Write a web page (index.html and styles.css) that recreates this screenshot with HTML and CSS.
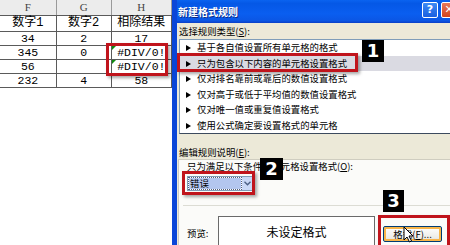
FILE: index.html
```html
<!DOCTYPE html>
<html lang="zh-CN">
<head>
    <meta charset="UTF-8">
    <title>新建格式规则</title>
    <link rel="stylesheet" href="styles.css">
</head>
<body>
<div class="page">
    <!-- Spreadsheet part -->
    <div class="sheet">
        <table class="grid">
            <tr class="col-head"><th>F</th><th>G</th><th>H</th></tr>
            <tr class="first"><td>数字1</td><td>数字2</td><td>相除结果</td></tr>
            <tr><td>34</td><td>2</td><td>17</td></tr>
            <tr><td>345</td><td>0</td><td class="err">#DIV/0!</td></tr>
            <tr><td>56</td><td></td><td class="err">#DIV/0!</td></tr>
            <tr><td>232</td><td>4</td><td>58</td></tr>
        </table>
    </div>

    <!-- Dialog -->
    <div class="dialog">
        <div class="titlebar">
            <span class="title">新建格式规则</span>
            <span class="tbtn help">?</span>
            <span class="tbtn close">✕</span>
        </div>
        <div class="dlg-body">
            <div class="lbl top-lbl">选择规则类型(<u>S</u>):</div>
            <ul class="rules">
                <li>基于各自值设置所有单元格的格式</li>
                <li class="sel">只为包含以下内容的单元格设置格式</li>
                <li>仅对排名靠前或靠后的数值设置格式</li>
                <li>仅对高于或低于平均值的数值设置格式</li>
                <li>仅对唯一值或重复值设置格式</li>
                <li>使用公式确定要设置格式的单元格</li>
            </ul>
            <div class="lbl edit-lbl">编辑规则说明(<u>E</u>):</div>
            <div class="panel">
                <div class="lbl">只为满足以下条件的单元格设置格式(<u>O</u>):</div>
                <div class="combo">
                    <span class="combo-val"><span class="hl">错误</span></span>
                    <span class="combo-btn">
                        <svg width="7" height="5" viewBox="0 0 7 5"><path d="M0.5 0.8 L3.5 3.8 L6.5 0.8" fill="none" stroke="#4d6185" stroke-width="1.4"/></svg>
                    </span>
                </div>
                <div class="sep"></div>
                <div class="preview-row">
                    <span class="lbl pv-lbl">预览:</span>
                    <div class="preview">未设定格式</div>
                    <button class="fmt-btn">格式(<u>F</u>)...</button>
                </div>
            </div>
        </div>
    </div>

    <!-- Annotations -->
    <div class="mark mark-cells"></div>
    <div class="mark mark-rule"></div>
    <div class="mark mark-combo"></div>
    <div class="mark mark-btn"></div>
    <div class="badge b1">1</div>
    <div class="badge b2">2</div>
    <div class="badge b3">3</div>
    <svg class="cursor" width="11" height="17" viewBox="0 0 11 17">
        <path d="M1 1 L1 14 L4 11 L6.5 16 L8.5 15 L6 10 L10 10 Z" fill="#fff" stroke="#000" stroke-width="1"/>
    </svg>
</div>
</body>
</html>
```

FILE: styles.css
```css
html, body {
    margin: 0;
    padding: 0;
    background: #fff;
}
.page {
    position: relative;
    width: 450px;
    height: 245px;
    overflow: hidden;
    display: flex;
    align-items: flex-start;
}

/* sheet */
.sheet {
    width: 172px;
    flex: none;
    overflow: hidden;
}
.grid {
    border-collapse: collapse;
    margin-left: -1px;
    font-family: "Liberation Mono", "Noto Sans CJK SC", monospace;
    font-size: 11.5px;
}
.grid th, .grid td {
    border: 1px solid #5a5a5a;
    padding: 0;
    text-align: center;
    height: 13px;
    line-height: 13px;
    white-space: nowrap;
}
.grid th:nth-child(1), .grid td:nth-child(1) { width: 57px; }
.grid th:nth-child(2), .grid td:nth-child(2) { width: 55px; }
.grid th:nth-child(3), .grid td:nth-child(3) { width: 60px; }
.col-head th {
    background: #ececec;
    border-top: none;
    border-color: #9a9a9a;
    border-bottom-color: #5a5a5a;
    font-family: "Liberation Serif", serif;
    font-weight: normal;
    font-size: 11px;
    color: #444;
    height: 15px;
}
.first td {
    height: 15px;
    font-size: 12px;
}
.err {
    position: relative;
}
.err::before {
    content: "";
    position: absolute;
    left: 0;
    top: 0;
    border-top: 4px solid #108a10;
    border-right: 4px solid transparent;
}

/* dialog */
.dialog {
    width: 283px;
    flex: none;
    height: 245px;
    border-left: 5px solid #0a46d8;
    background: #ece9d8;
    font-family: "Noto Sans CJK SC", "DejaVu Sans", sans-serif;
    font-size: 9.4px;
    color: #000;
}
.titlebar {
    height: 23px;
    display: flex;
    align-items: center;
    padding-left: 1px;
    padding-right: 3px;
    background: linear-gradient(#0a63f0, #0558e6 15%, #0a5ef0 60%, #0b56e4 90%, #0a3fc6);
}
.title {
    color: #fff;
    font-weight: bold;
    font-size: 10px;
    text-shadow: 1px 1px 0 #0a2a8a;
    flex: 1;
}
.tbtn {
    width: 14px;
    height: 14px;
    border: 1px solid #fff;
    border-radius: 2px;
    color: #fff;
    font-family: "DejaVu Sans", sans-serif;
    font-weight: bold;
    font-size: 11px;
    line-height: 14px;
    text-align: center;
    margin-top: -4px;
}
.help {
    background: linear-gradient(#3d8bf5, #1a5fe0);
    margin-right: 3px;
}
.close {
    background: linear-gradient(#e8795a, #d1441e);
}
.dlg-body {
    padding-left: 2px;
}
.lbl {
    line-height: 12px;
    height: 12px;
    white-space: nowrap;
}
.top-lbl {
    padding-top: 2px;
    height: 14px;
}
.rules {
    list-style: none;
    margin: 0;
    padding: 0;
    background: #fff;
    border: 1px solid #7f9db9;
    border-bottom: 1px solid #3c4a5e;
    border-right: none;
}
.rules li {
    height: 15.5px;
    line-height: 15.5px;
    padding-left: 17px;
    position: relative;
    white-space: nowrap;
}
.rules li::before {
    content: "";
    position: absolute;
    left: 6px;
    top: 5px;
    border-left: 5px solid #000;
    border-top: 3px solid transparent;
    border-bottom: 3px solid transparent;
}
.rules li.sel {
    background: #dadae2;
}
.edit-lbl {
    margin-top: 12px;
}
.panel {
    margin-top: 1px;
    margin-left: -1px;
    height: 100px;
    background: #fbfbf9;
    border: 1px solid #cfcdc0;
    border-right: none;
    padding-left: 8px;
    padding-top: 0;
}
.combo {
    margin-top: 4px;
    display: flex;
    width: 64px;
    height: 13px;
    border: 1px solid #7f9db9;
    background: #fff;
}
.combo-val {
    flex: 1;
    padding: 1px;
}
.hl {
    display: block;
    height: 11px;
    line-height: 11px;
    background: #b3c6ef;
    outline: 1px dotted #56627a;
    padding-left: 1px;
}
.combo-btn {
    width: 10px;
    background: #c9d8f6;
    display: flex;
    align-items: center;
    justify-content: center;
}
.sep {
    margin-top: 14px;
    margin-left: -4px;
    border-top: 1px solid #dcdcd4;
}
.preview-row {
    display: flex;
    align-items: flex-start;
    margin-top: 10px;
}
.pv-lbl {
    width: 31px;
    margin-top: 11px;
}
.preview {
    width: 155px;
    height: 36px;
    border: 1px solid #6a6a6a;
    background: #fff;
    text-align: center;
    font-size: 12px;
    line-height: 30px;
}
.fmt-btn {
    margin-left: 8px;
    margin-top: 10px;
    width: 59px;
    height: 16px;
    padding: 0;
    font-family: "Noto Sans CJK SC", sans-serif;
    font-size: 9.5px;
    line-height: 12px;
    background: linear-gradient(#ffffff, #ecebe6 80%, #d6d0c5);
    border: 1px solid #003c74;
    border-radius: 2px;
    box-shadow: inset 0 0 0 2px #f8b54a;
    color: #000;
}

/* annotations */
.mark {
    position: absolute;
    border: 3px solid #c0141c;
    box-shadow: 2px 2px 3px rgba(0, 0, 0, 0.35);
}
.mark-cells {
    left: 106px;
    top: 43px;
    width: 56px;
    height: 27px;
}
.mark-rule {
    left: 177px;
    top: 53px;
    width: 175px;
    height: 13px;
}
.mark-combo {
    left: 182px;
    top: 171px;
    width: 67px;
    height: 18px;
}
.mark-btn {
    left: 378px;
    top: 215px;
    width: 66px;
    height: 28px;
}
.badge {
    position: absolute;
    width: 22px;
    height: 22px;
    background: #000;
    color: #fff;
    font-family: "DejaVu Sans", sans-serif;
    font-weight: bold;
    font-size: 18px;
    line-height: 22px;
    text-align: center;
}
.b1 { left: 362px; top: 40px; }
.b2 { left: 260px; top: 158px; width: 23px; }
.b3 { left: 383px; top: 190px; width: 21px; }
.cursor {
    position: absolute;
    left: 403px;
    top: 226px;
}
```
